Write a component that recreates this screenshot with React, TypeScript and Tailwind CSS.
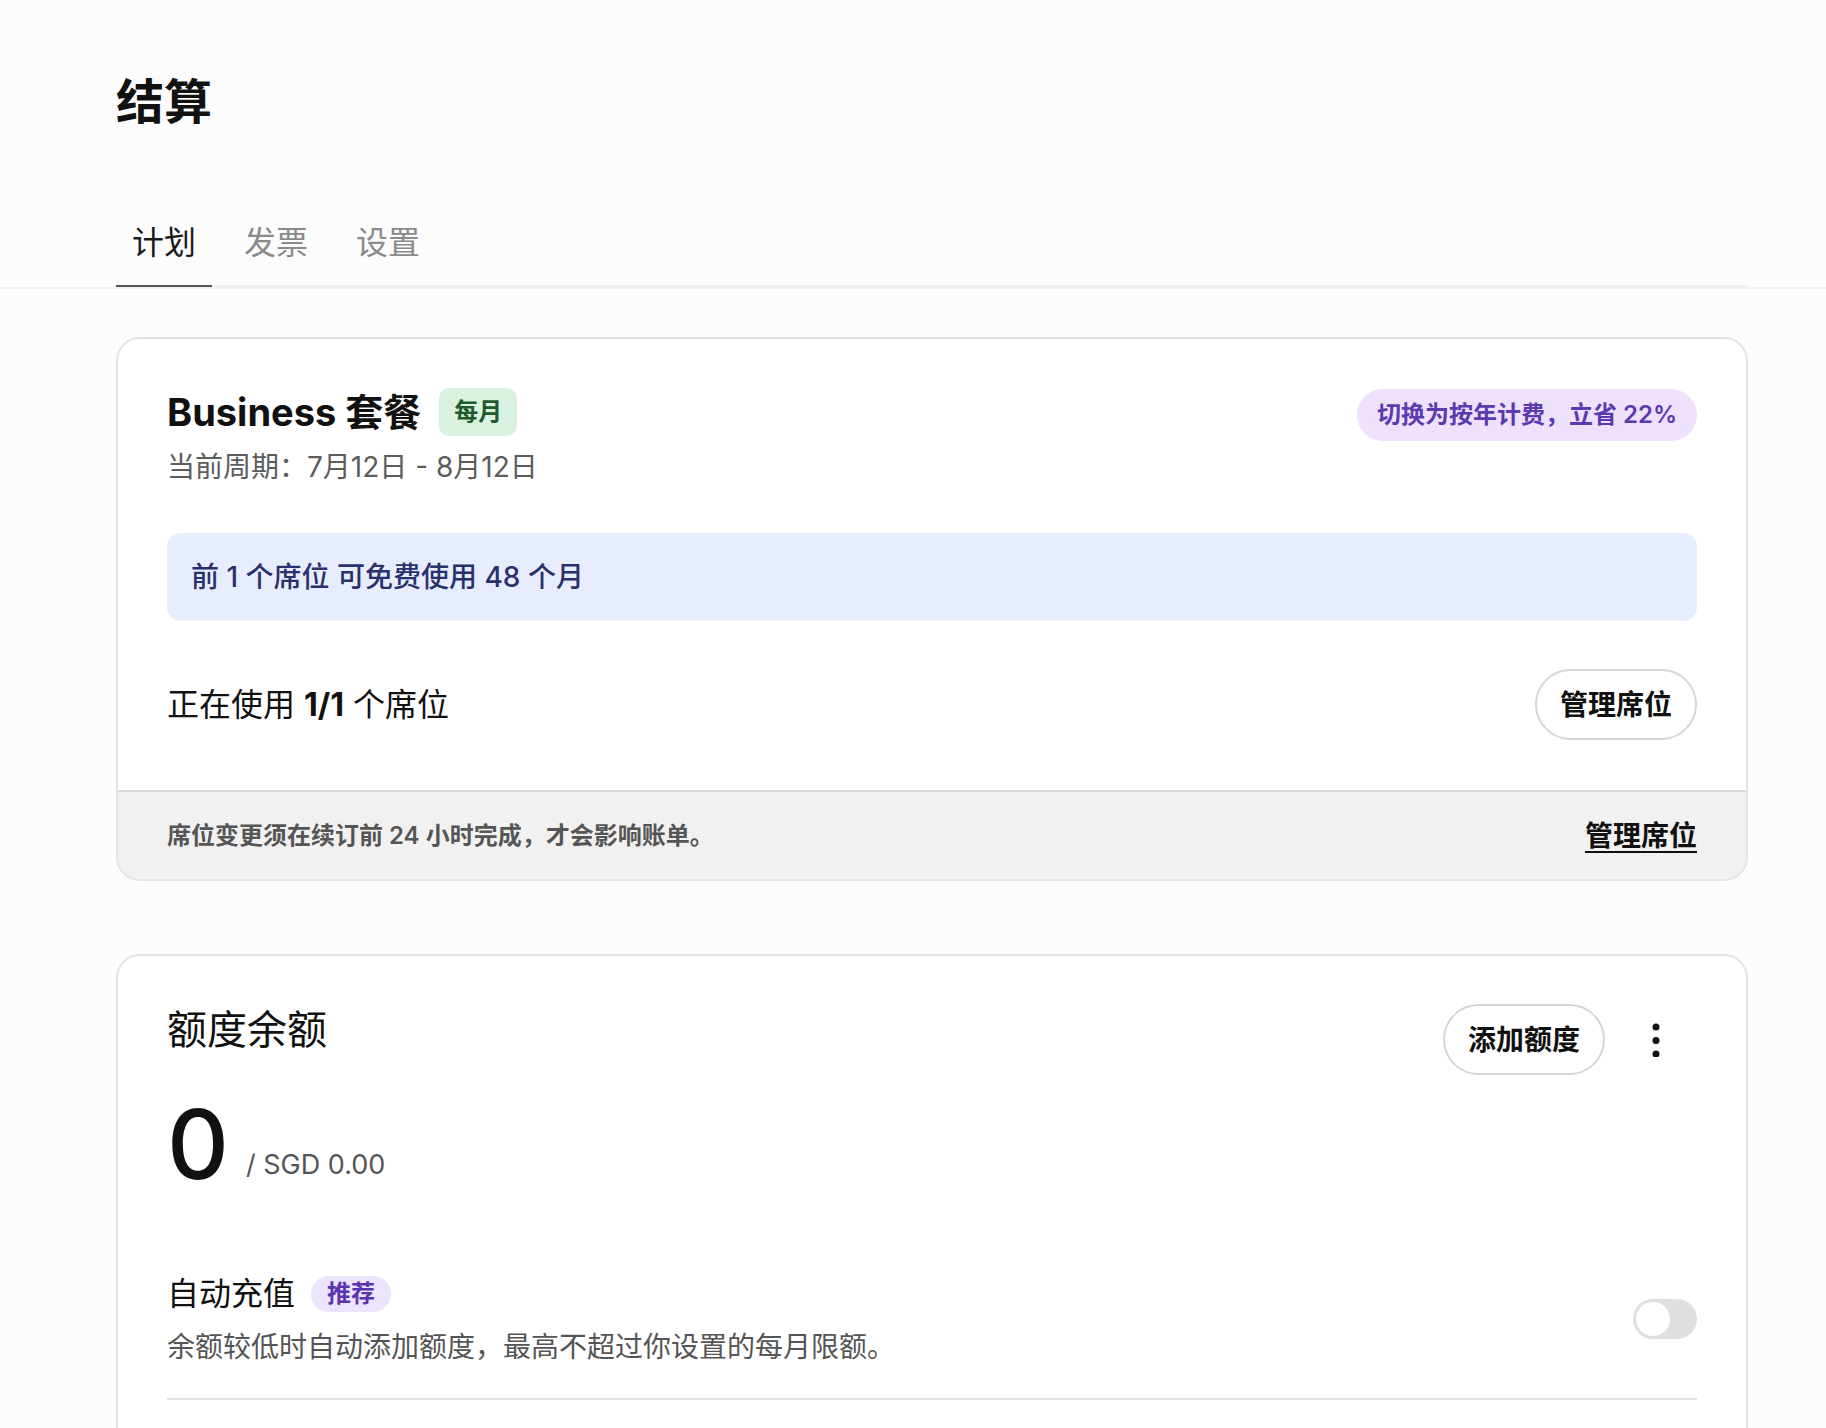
import React from "react";

const TABS = [
  { label: "计划", active: true },
  { label: "发票", active: false },
  { label: "设置", active: false },
];

function KebabIcon() {
  return (
    <svg width="14" height="34" viewBox="0 0 14 34" fill="#111">
      <circle cx="7" cy="4" r="3.5" />
      <circle cx="7" cy="17.5" r="3.5" />
      <circle cx="7" cy="31" r="3.5" />
    </svg>
  );
}

function PillButton({ children }: { children: React.ReactNode }) {
  return (
    <button
      type="button"
      className="h-[71px] rounded-full border-2 border-[#d6d6d6] bg-white px-[23px] text-[28px] font-bold text-[#111]"
    >
      {children}
    </button>
  );
}

function PlanCard() {
  return (
    <section className="overflow-hidden rounded-[24px] border-2 border-[#e3e3e3] bg-white">
      <div className="px-[49px] pt-[49px] pb-[50px]">
        {/* Plan title + upsell */}
        <div className="flex items-start justify-between">
          <div className="flex items-center gap-[18px]">
            <h2 className="text-[38px] leading-[48px] font-bold text-[#111]">
              Business 套餐
            </h2>
            <span className="flex h-[48px] items-center rounded-[10px] bg-[#d9f1e0] px-[15px] text-[24px] font-bold text-[#1f5a2b]">
              每月
            </span>
          </div>
          <span className="mt-[1px] flex h-[52px] items-center rounded-full bg-[#ede1fc] px-[20px] text-[24px] font-semibold text-[#5b3ab0]">
            切换为按年计费，立省 22%
          </span>
        </div>
        <p className="mt-[6px] text-[28px] leading-[40px] text-[#5c5c5c]">
          当前周期：7月12日 - 8月12日
        </p>

        {/* Free seats notice */}
        <div className="mt-[46px] flex h-[88px] items-center rounded-[14px] bg-[#e8edfd] px-[24px] text-[28px] font-medium text-[#28316b]">
          前 1 个席位 可免费使用 48 个月
        </div>

        {/* Seats */}
        <div className="mt-[48px] flex items-center justify-between">
          <p className="text-[32px] leading-[40px] text-[#111]">
            正在使用 <span className="font-bold">1/1</span> 个席位
          </p>
          <PillButton>管理席位</PillButton>
        </div>
      </div>

      <div className="flex h-[89px] items-center justify-between border-t-2 border-[#dadada] bg-[#f1f1f1] px-[49px]">
        <p className="text-[24px] font-semibold text-[#555]">
          席位变更须在续订前 24 小时完成，才会影响账单。
        </p>
        <a className="text-[28px] font-bold text-[#111] underline underline-offset-[5px]">
          管理席位
        </a>
      </div>
    </section>
  );
}

function CreditCard() {
  return (
    <section className="mt-[73px] rounded-[24px] border-2 border-[#e3e3e3] bg-white px-[49px] pt-[48px] pb-[80px]">
      {/* Header */}
      <div className="flex items-start justify-between">
        <h2 className="mt-[2px] text-[40px] leading-[48px] text-[#111]">额度余额</h2>
        <div className="flex items-center gap-[28px]">
          <PillButton>添加额度</PillButton>
          <button
            type="button"
            className="mr-[18px] flex h-[46px] w-[46px] items-center justify-center"
          >
            <KebabIcon />
          </button>
        </div>
      </div>

      {/* Balance */}
      <div className="mt-[21px] flex items-end gap-[17px]">
        <span className="text-[96px] leading-none font-medium text-[#111]">0</span>
        <span className="mb-[7px] text-[27px] leading-[40px] text-[#555]">/ SGD 0.00</span>
      </div>

      {/* Auto top-up */}
      <div className="mt-[84px] flex items-center justify-between">
        <div>
          <div className="flex items-center gap-[16px]">
            <h3 className="text-[32px] leading-[36px] text-[#111]">自动充值</h3>
            <span className="flex h-[36px] items-center rounded-full bg-[#ece3fd] px-[16px] text-[24px] font-bold text-[#5a35b0]">
              推荐
            </span>
          </div>
          <p className="mt-[15px] text-[28px] leading-[40px] text-[#555]">
            余额较低时自动添加额度，最高不超过你设置的每月限额。
          </p>
        </div>
        <button
          type="button"
          className="mb-[6px] flex h-[40px] w-[64px] items-center rounded-full bg-[#dfdfdf] p-[3px]"
        >
          <span className="h-[34px] w-[34px] rounded-full bg-white" />
        </button>
      </div>

      <div className="mt-[31px] h-[2px] bg-[#e3e3e3]" />
    </section>
  );
}

export default function App() {
  return (
    <div className="min-h-screen bg-[#fcfcfc] font-['Inter','Noto_Sans_CJK_SC',sans-serif] text-[#111]">
      <header className="border-b-2 border-[#f0f0f0] pt-[73px] pr-[78px] pl-[116px]">
        <h1 className="text-[48px] leading-[58px] font-bold text-[#111]">结算</h1>
        <nav className="mt-[92px] flex gap-4 border-b-2 border-[#f0f0f0]">
          {TABS.map((tab) => (
            <button
              key={tab.label}
              type="button"
              className={`-mb-[2px] border-b-2 px-4 pb-[22px] text-[32px] leading-[40px] ${
                tab.active
                  ? "border-[#555] text-[#1a1a1a]"
                  : "border-transparent text-[#8a8a8a]"
              }`}
            >
              {tab.label}
            </button>
          ))}
        </nav>
      </header>

      <main className="pt-[48px] pr-[78px] pl-[116px]">
        <PlanCard />
        <CreditCard />
      </main>
    </div>
  );
}
